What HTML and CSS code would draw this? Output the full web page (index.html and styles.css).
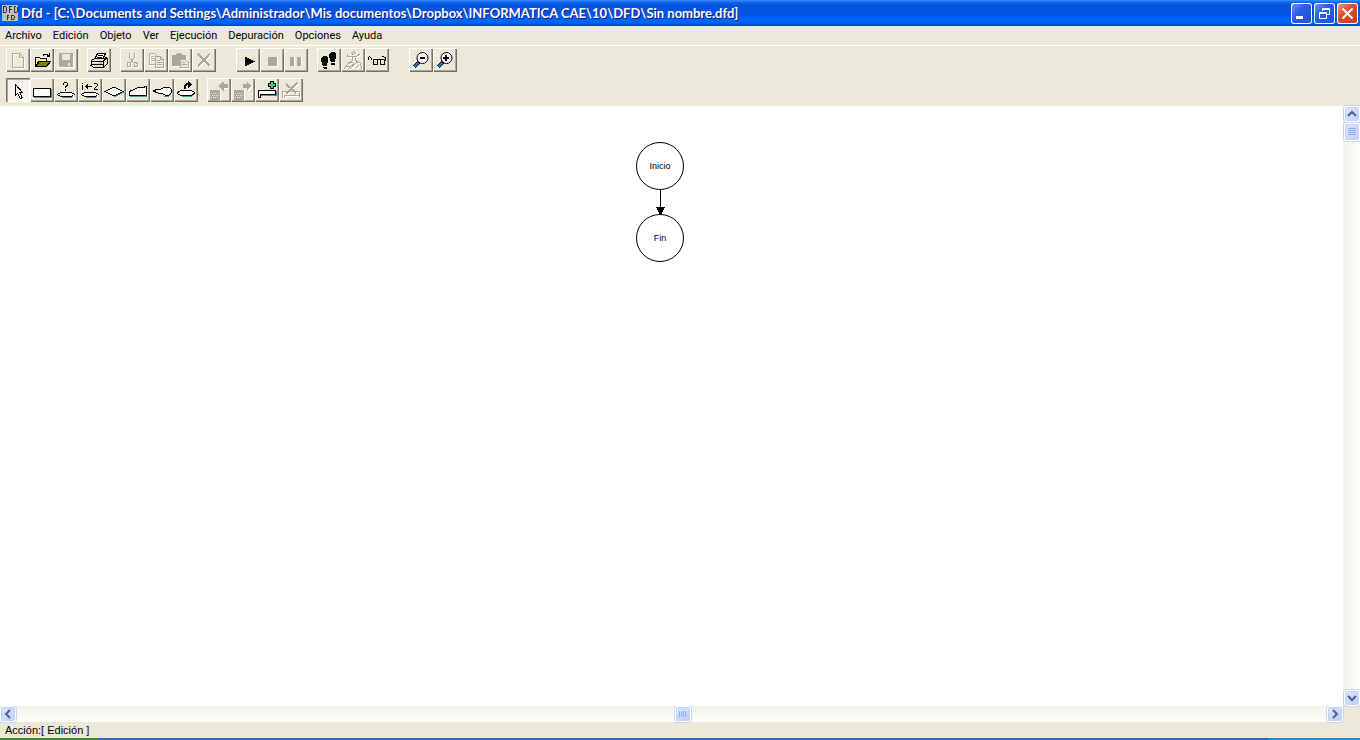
FILE: index.html
```html
<!DOCTYPE html>
<html lang="es">
<head>
<meta charset="utf-8">
<title>Dfd - Sin nombre.dfd</title>
<link rel="stylesheet" href="styles.css">
</head>
<body>
<div class="window">
  <header class="titlebar">
    <svg class="app-icon" viewBox="0 0 16 16" aria-hidden="true"><path fill="#c0c0c0" d="M0 0h16v16H0z"/><path fill="none" stroke="#303030" d="M1.500 1v6M1 1.500h3M4.500 2v5M1 7.500h3M7.500 1v7M7 1.500h3M7 4.500h3M12.500 1v7M12 1.500h2M15.500 2v5M12 7.500h3M5.500 10v5M5 10.500h2M5 12.500h2M9.500 10v5M9 10.500h3M12.500 11v3M9 14.500h3"/></svg>
    <h1 class="title">Dfd - [C:\Documents and Settings\Administrador\Mis documentos\Dropbox\INFORMATICA CAE\10\DFD\Sin nombre.dfd]</h1>
    <div class="window-buttons">
      <button class="win" aria-label="Minimizar"><svg viewBox="0 0 21 21"><path fill="#fff" d="M5 13h7v3H5z"/></svg></button>
      <button class="win" aria-label="Restaurar"><svg viewBox="0 0 21 21"><path fill="none" stroke="#fff" d="M8.500 8V5.500h7v6H13M8 6.500h8M5.500 9.500h7v6h-7zM5 10.500h8"/></svg></button>
      <button class="win close" aria-label="Cerrar"><svg viewBox="0 0 21 21"><path stroke="#fff" stroke-width="2" d="M5.500 5.500l10 10M15.500 5.500l-10 10"/></svg></button>
    </div>
  </header>
  <nav class="menubar">
    <button>Archivo</button><button>Edición</button><button>Objeto</button><button>Ver</button><button>Ejecución</button><button>Depuración</button><button>Opciones</button><button>Ayuda</button>
  </nav>
  <div class="toolbars">
    <div class="toolbar">
      <div class="group after-s">
        <button class="tool" aria-label="Nuevo"><svg class="off" viewBox="0 0 24 24"><path d="M6.500 5.500h7l4 4v10h-11zM13.500 5.500v4h4"/></svg></button>
        <button class="tool" aria-label="Abrir"><svg class="ink" viewBox="0 0 24 24"><path fill="#ffff80" d="M5.500 18.500v-9h4l1 1h6v3h-8l-3 5"/><path fill="#808000" d="M5.500 18.500l4-5h11l-4 5z"/><path d="M13 7.500l1-1h3l2 2M19.500 5v4M17 8.500h3"/></svg></button>
        <button class="tool" aria-label="Guardar"><svg viewBox="0 0 24 24"><path fill="#aca899" d="M5 5h14v14H6l-1-1z"/><path fill="#ece9d8" d="M8 6h8v6H8zM14 15h2v3h-2z"/><path class="shade" d="M6 19.500h13.500V6"/></svg></button>
      </div>
      <div class="group after-s">
        <button class="tool" aria-label="Imprimir"><svg class="ink" viewBox="0 0 24 24"><path fill="#fff" d="M7.500 11.500l3-6h8l-3 6z"/><path d="M11 7.500h5M10 9.500h5"/><path fill="#e0e0d8" d="M4.500 12.500l3-2h10l2-1 1 2v4l-4 4H7l-3-2z"/><path d="M4 13.500h12l4-4M16.500 14v5M5 16.500h11"/><path stroke="#d8d020" d="M12 15h3"/></svg></button>
      </div>
      <div class="group after-l">
        <button class="tool" aria-label="Cortar"><svg class="off" viewBox="0 0 24 24"><path d="M9.500 5v4l4 6M14.500 5v4l-4 6"/><path d="M8 14.500h2v4H7.500v-3zM14 14.500h2l1 1v3h-3z"/></svg></button>
        <button class="tool" aria-label="Copiar"><svg class="off" viewBox="0 0 24 24"><path d="M5.500 5.500h5l3 3v8h-8zM7 8.500h3M7 10.500h4M7 12.500h4"/><path fill="#ece9d8" d="M11.500 8.500h5l3 3v8h-8zM16.500 8.500v3h3M13 12.500h3M13 14.500h5M13 16.500h5"/></svg></button>
        <button class="tool" aria-label="Pegar"><svg class="off" viewBox="0 0 24 24"><path fill="#aca899" d="M4.500 7.500h3l2-2h3l2 2h3v10h-13z"/><path fill="#ece9d8" d="M12.500 11.500h5l3 3v5h-8zM14 14.500h3M14 16.500h5"/></svg></button>
        <button class="tool" aria-label="Eliminar"><svg class="off" viewBox="0 0 24 24"><path class="thick" d="M6 6l12 12M18 5.500L6 18.500"/></svg></button>
      </div>
      <div class="group after-s">
        <button class="tool" aria-label="Ejecutar"><svg viewBox="0 0 24 24"><path d="M9 8.500l10 5-10 5z"/></svg></button>
        <button class="tool" aria-label="Detener"><svg viewBox="0 0 24 24"><path fill="#aca899" d="M8 9h9v9H8z"/><path class="shade" d="M8 18.500h9.500V9"/></svg></button>
        <button class="tool" aria-label="Pausa"><svg viewBox="0 0 24 24"><path fill="#aca899" d="M6 9h4v9H6zM13 9h4v9h-4z"/><path class="shade" d="M10.500 9v9.500M17.500 9v9.500"/></svg></button>
      </div>
      <div class="group after-m">
        <button class="tool" aria-label="Paso simple"><svg viewBox="0 0 24 24"><path d="M6 8h3l2 2v3l-1 5H6l-2-5v-3zM6 19h4v2H7zM14 4h3l2 2v3l-1 5h-4l-2-5V6zM14 15h4v2h-4z"/></svg></button>
        <button class="tool" aria-label="Ejecutar hasta"><svg class="off" viewBox="0 0 24 24"><path d="M11 4.500l2-1 1 2-2 1zM6 6l1 3 5-1h4l3-2M12 9l-1 4M14 9v3l3 2M11 13l-4 2M3 21l4-5 4-2 2 2-4 3-2 2M9 21l7-7 3 1 2 6M15 20l3-3M6 18l3 1"/></svg></button>
        <button class="tool" aria-label="Evaluar"><svg class="ink" viewBox="0 0 24 24"><path d="M3.500 12V9.500l1-1 1 1 2 3M8.500 11.500h4v5h-4zM12 11.500h3M15.500 11.500h4v5h-4zM20.500 13v-3l-2-1.500h-2"/></svg></button>
      </div>
      <div class="group">
        <button class="tool" aria-label="Alejar"><svg viewBox="0 0 24 24"><path stroke="#000" stroke-width="4" d="M10 14l-5 5"/><path stroke="#2878c0" stroke-width="2" d="M9 15l-4 4"/><circle class="lens" cx="13.500" cy="10" r="5.500"/><path stroke="#000" stroke-width="2" d="M11 10h5"/></svg></button>
        <button class="tool" aria-label="Acercar"><svg viewBox="0 0 24 24"><path stroke="#000" stroke-width="4" d="M10 14l-5 5"/><path stroke="#2878c0" stroke-width="2" d="M9 15l-4 4"/><circle class="lens" cx="13.500" cy="10" r="5.500"/><path stroke="#000" stroke-width="2" d="M10 10h6M13 7v6"/></svg></button>
      </div>
    </div>
    <div class="toolbar">
      <div class="group after-s">
        <button class="tool pressed" aria-label="Cursor"><svg class="ink" viewBox="0 0 24 24"><path fill="#fff" d="M9.500 6.500v11l2-2 3 5 2-1-3-5h3z"/></svg></button>
        <button class="tool" aria-label="Asignación"><svg class="ink" viewBox="0 0 24 24"><path stroke="#3c9c98" d="M4 19.500h17.500V11"/><path fill="#fff" d="M3.500 10.500h17v8h-17z"/></svg></button>
        <button class="tool" aria-label="Lectura"><svg class="ink" viewBox="0 0 24 24"><path stroke="#3c9c98" d="M8 19.500h9l3-2"/><path fill="#fff" d="M7.500 14.500h9l3 1 1 1-1 1-3 1h-9l-3-1-1-1 1-1z"/><path d="M9.500 7V5.500l1-1h2l1 1V7l-2 2v1M11.500 11v1.500"/></svg></button>
        <button class="tool" aria-label="Asignar valor"><svg class="ink" viewBox="0 0 24 24"><path stroke="#3c9c98" d="M8 19.500h9l3-2"/><path fill="#fff" d="M7.500 14.500h9l3 1 1 1-1 1-3 1h-9l-3-1-1-1 1-1z"/><path d="M4.500 5v1M4.500 7v5M7 8.500h7M9.500 6v5M8.500 7v3M16 5.500h3M19.500 6v2M18.500 8v1M17.500 9v1M16.500 10v1M16 11.500h4"/></svg></button>
        <button class="tool" aria-label="Decisión"><svg class="ink" viewBox="0 0 24 24"><path stroke="#3c9c98" d="M12 19l10-5"/><path fill="#fff" d="M3 13.500l9-4.500 9 4.500-9 4.500z"/></svg></button>
        <button class="tool" aria-label="Entrada"><svg class="ink" viewBox="0 0 24 24"><path stroke="#3c9c98" d="M4 18.500h17"/><path fill="#fff" d="M3.500 17.500v-4l9-4h4l4-1v9z"/></svg></button>
        <button class="tool" aria-label="Salida"><svg class="ink" viewBox="0 0 24 24"><path stroke="#3c9c98" d="M14 18.500h4l3-3"/><path fill="#fff" d="M3 13l5-2h3l4-2h4l2 2v4l-2 2h-4l-4-2H8z"/></svg></button>
        <button class="tool" aria-label="Subprograma"><svg class="ink" viewBox="0 0 24 24"><path stroke="#3c9c98" d="M8 18.500h9l3-2"/><path fill="#fff" d="M7.500 12.500h9l3 1 1 1-1 2-3 1h-9l-3-1-1-1 1-2z"/><path stroke-width="2" d="M11 11V8l2-2h2"/><path fill="#000" d="M14.500 3.500l3 3-3 3z"/></svg></button>
      </div>
      <div class="group">
        <button class="tool" aria-label="Subprograma anterior"><svg viewBox="0 0 24 24"><path fill="#aca899" d="M3 12h10v10H3zM11.500 8l5-4.500V6h4v4h-4v2.500z"/><path class="dither" d="M4 15.500h8M5 17.500h7M4 19.500h8"/><path class="shade" d="M13.500 12v10.500M17 10.500h4"/></svg></button>
        <button class="tool" aria-label="Subprograma siguiente"><svg viewBox="0 0 24 24"><path fill="#aca899" d="M3 12h10v10H3zM21 8l-5-4.500V6h-4v4h4v2.500z"/><path class="dither" d="M4 15.500h8M5 17.500h7M4 19.500h8"/><path class="shade" d="M13.500 12v10.500M17 12.500l4-4"/></svg></button>
        <button class="tool" aria-label="Agregar subprograma"><svg class="ink" viewBox="0 0 24 24"><path fill="#fff" d="M3.500 19.500v-7h17v4h-15v3z"/><path stroke="#3c9c98" d="M6 17.500h15.500V13"/><path fill="#20e070" d="M15.500 3.500h3v2h2v3h-2v2h-3v-2h-2v-3h2z"/></svg></button>
        <button class="tool" aria-label="Eliminar subprograma"><svg class="off" viewBox="0 0 24 24"><path d="M3.500 19.500v-6h17v4h-15v2M20.500 17v2"/><path class="thick" d="M7 6l10 9M18 5L7 16"/></svg></button>
      </div>
    </div>
  </div>
  <main class="workspace">
    <div class="canvas">
      <div class="node start">Inicio</div>
      <svg class="connector" viewBox="0 0 10 25" aria-hidden="true"><path d="M4 0h1v18H4zM0 17h9l-4 8H4z"/></svg>
      <div class="node end">Fin</div>
    </div>
    <div class="scroll vertical">
      <button class="sb" aria-label="Arriba"><svg viewBox="0 0 14 14"><path d="M3 9l4-4 4 4"/></svg></button>
      <div class="sb thumb"><svg viewBox="0 0 14 16"><path class="grip" d="M3 4.500h8M3 6.500h8M3 8.500h8M3 10.500h8"/></svg></div>
      <button class="sb last" aria-label="Abajo"><svg viewBox="0 0 14 14"><path d="M3 5l4 4 4-4"/></svg></button>
    </div>
    <div class="scroll horizontal">
      <button class="sb" aria-label="Izquierda"><svg viewBox="0 0 14 14"><path d="M9 3L5 7l4 4"/></svg></button>
      <div class="track"><div class="sb"><svg viewBox="0 0 14 14"><path class="grip" d="M3.500 4v6M5.500 4v6M7.500 4v6M9.500 4v6"/></svg></div></div>
      <button class="sb" aria-label="Derecha"><svg viewBox="0 0 14 14"><path d="M5 3l4 4-4 4"/></svg></button>
    </div>
  </main>
  <footer class="status">Acción:[ Edición ]</footer>
  <div class="taskbar"><div class="start-edge"></div><div class="tray-edge"></div></div>
</div>
</body>
</html>
```
FILE: styles.css
```css
* { box-sizing: border-box; }
body { margin: 0; background: #ece9d8; color: #000; }
button { border: 0; padding: 0; margin: 0; background: none; color: inherit; font: inherit; }
svg { display: block; fill: none; }
.window { display: flex; flex-direction: column; height: 100vh; overflow: hidden; }

.titlebar {
  display: flex; align-items: center; flex: none; height: 26px; padding: 0 2px; gap: 3px;
  background: linear-gradient(#3a93ff 0, #1268f0 2px, #0553dd 5px, #0054e3 14px, #0066ff 20px, #0062f5 23px, #0040c8 26px);
}
.app-icon { width: 16px; height: 16px; flex: none; }
.title {
  flex: 1; margin: 0; color: #fff; font: bold 13px/24px Lato, sans-serif;
  text-shadow: 1px 1px 0 #0a1883; white-space: nowrap;
}
.window-buttons { display: flex; gap: 2px; }
.win {
  width: 21px; height: 21px; border-radius: 3px; box-shadow: inset 0 0 0 1px #fff;
  background: linear-gradient(135deg, #7a9ff2, #2a5ee0 40%, #2450d0);
}
.win.close { background: linear-gradient(135deg, #f0a080, #e0502c 40%, #c03818); }
.win svg { width: 21px; height: 21px; }

.menubar {
  display: flex; align-items: flex-start; flex: none; height: 19px; padding: 1px 5px 0; gap: 11px;
  font: 11px/18px Roboto, sans-serif;
}

.toolbars {
  display: flex; flex-direction: column; flex: none; gap: 6px; padding: 2px 6px 4px;
  border-top: 1px solid #fff;
}
.toolbar, .group { display: flex; }
.after-s { margin-right: 9px; }
.after-m { margin-right: 20px; }
.after-l { margin-right: 20px; }
.tool {
  width: 24px; height: 24px;
  box-shadow: inset 1px 1px 0 #fff, inset -1px -1px 0 #716f64, inset -2px -2px 0 #aca899;
}
.tool.pressed { background: #f6f4ec; box-shadow: inset 1px 1px 0 #716f64, inset 2px 2px 0 #aca899, inset -1px -1px 0 #fff; }
.tool svg { width: 24px; height: 24px; fill: #000; shape-rendering: crispEdges; }
.tool svg.ink { fill: none; stroke: #000; }
.tool svg.off { fill: none; stroke: #aca899; filter: drop-shadow(1px 1px 0 #fff); }
.tool .thick { stroke-width: 2; }
.tool .shade { fill: none; stroke: #fff; }
.tool .dither { fill: none; stroke: #ece9d8; stroke-dasharray: 1 1; }
.tool .lens { fill: #fff; stroke: #000; shape-rendering: auto; }

.workspace {
  display: grid; flex: 1; min-height: 0;
  grid-template-columns: 1fr 17px; grid-template-rows: 1fr 16px;
}
.canvas { position: relative; background: #fff; overflow: hidden; }
.node {
  position: absolute; left: 636px; width: 48px; height: 48px;
  border: 1px solid #000; border-radius: 50%;
  font: 9px/46px "Liberation Sans", Arial, sans-serif; text-align: center;
}
.start { top: 36px; }
.end { top: 108px; }
.connector { position: absolute; left: 656px; top: 84px; width: 10px; height: 25px; fill: #000; shape-rendering: crispEdges; }

.scroll { display: flex; }
.vertical { flex-direction: column; padding-left: 1px; background: linear-gradient(90deg, #f3f1ec, #fefefb); }
.horizontal { background: linear-gradient(#f3f1ec, #fefefb); }
.sb {
  flex: none; width: 16px; height: 16px; border: 1px solid #fff; border-radius: 3px;
  background: linear-gradient(135deg, #dce6ff, #bccdf9);
  box-shadow: inset 0 0 0 1px #c2d2fa, 0 0 0 1px #c8d4ee;
}
.thumb { height: 18px; margin-top: 1px; }
.last { margin-top: auto; }
.sb svg { width: 14px; height: 14px; stroke: #4d6185; stroke-width: 2; }
.thumb svg { height: 16px; }
.sb .grip { stroke: #8cacf0; stroke-width: 1; }
.track { display: flex; flex: 1; justify-content: center; padding-left: 22px; }

.status { flex: none; height: 16px; padding-left: 5px; font: 11px/16px "Liberation Sans", Arial, sans-serif; }
.taskbar { display: flex; justify-content: space-between; flex: none; height: 2px; background: #2a6ad0; }
.start-edge { width: 98px; background: #388838; }
.tray-edge { width: 92px; background: #1090e0; }
```
